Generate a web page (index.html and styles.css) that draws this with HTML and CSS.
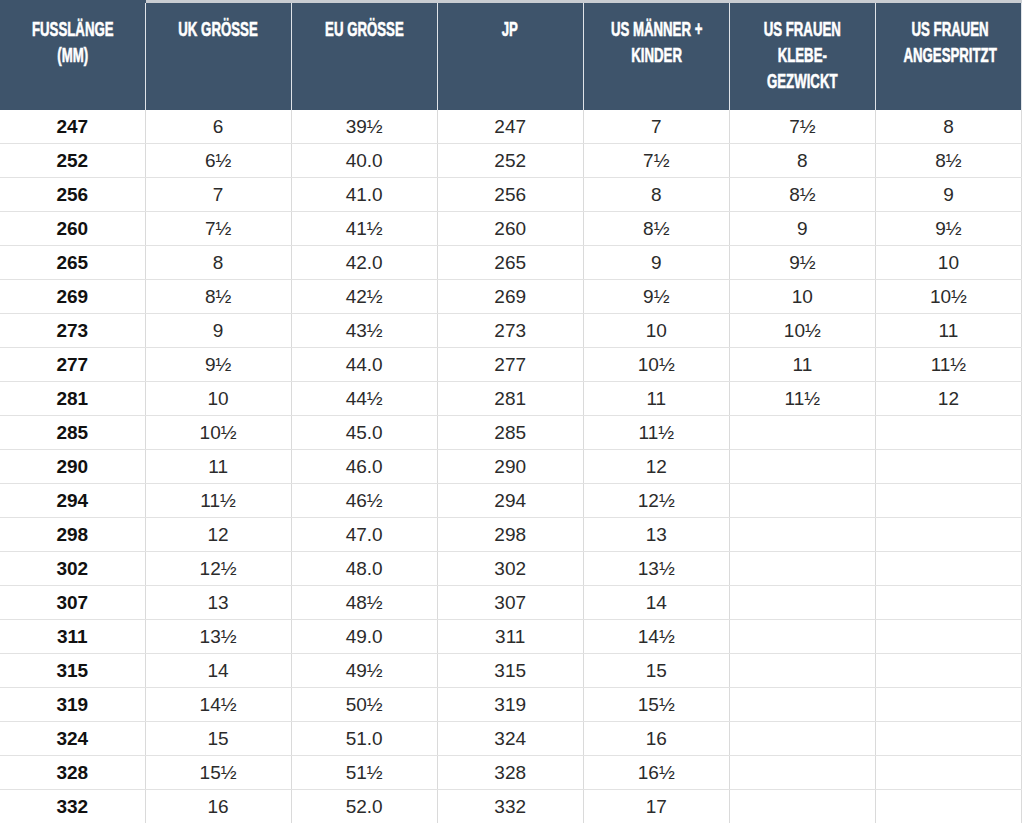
FILE: index.html
```html
<!DOCTYPE html>
<html lang="de">
<head>
<meta charset="utf-8">
<title>Größentabelle</title>
<link rel="stylesheet" href="styles.css">
</head>
<body>
<table class="sizes">
  <colgroup>
    <col class="c-first"><col class="c"><col class="c"><col class="c"><col class="c"><col class="c"><col class="c">
  </colgroup>
  <thead>
    <tr>
      <th class="first"><span class="hd">Fusslänge<br>(mm)</span></th>
      <th><span class="hd">UK Grösse</span></th>
      <th><span class="hd">EU Grösse</span></th>
      <th><span class="hd">JP</span></th>
      <th><span class="hd">US Männer +<br>Kinder</span></th>
      <th><span class="hd">US Frauen<br>Klebe-<br>gezwickt</span></th>
      <th><span class="hd">US Frauen<br>angespritzt</span></th>
    </tr>
  </thead>
  <tbody>
    <tr><td>247</td><td>6</td><td>39½</td><td>247</td><td>7</td><td>7½</td><td>8</td></tr>
    <tr><td>252</td><td>6½</td><td>40.0</td><td>252</td><td>7½</td><td>8</td><td>8½</td></tr>
    <tr><td>256</td><td>7</td><td>41.0</td><td>256</td><td>8</td><td>8½</td><td>9</td></tr>
    <tr><td>260</td><td>7½</td><td>41½</td><td>260</td><td>8½</td><td>9</td><td>9½</td></tr>
    <tr><td>265</td><td>8</td><td>42.0</td><td>265</td><td>9</td><td>9½</td><td>10</td></tr>
    <tr><td>269</td><td>8½</td><td>42½</td><td>269</td><td>9½</td><td>10</td><td>10½</td></tr>
    <tr><td>273</td><td>9</td><td>43½</td><td>273</td><td>10</td><td>10½</td><td>11</td></tr>
    <tr><td>277</td><td>9½</td><td>44.0</td><td>277</td><td>10½</td><td>11</td><td>11½</td></tr>
    <tr><td>281</td><td>10</td><td>44½</td><td>281</td><td>11</td><td>11½</td><td>12</td></tr>
    <tr><td>285</td><td>10½</td><td>45.0</td><td>285</td><td>11½</td><td></td><td></td></tr>
    <tr><td>290</td><td>11</td><td>46.0</td><td>290</td><td>12</td><td></td><td></td></tr>
    <tr><td>294</td><td>11½</td><td>46½</td><td>294</td><td>12½</td><td></td><td></td></tr>
    <tr><td>298</td><td>12</td><td>47.0</td><td>298</td><td>13</td><td></td><td></td></tr>
    <tr><td>302</td><td>12½</td><td>48.0</td><td>302</td><td>13½</td><td></td><td></td></tr>
    <tr><td>307</td><td>13</td><td>48½</td><td>307</td><td>14</td><td></td><td></td></tr>
    <tr><td>311</td><td>13½</td><td>49.0</td><td>311</td><td>14½</td><td></td><td></td></tr>
    <tr><td>315</td><td>14</td><td>49½</td><td>315</td><td>15</td><td></td><td></td></tr>
    <tr><td>319</td><td>14½</td><td>50½</td><td>319</td><td>15½</td><td></td><td></td></tr>
    <tr><td>324</td><td>15</td><td>51.0</td><td>324</td><td>16</td><td></td><td></td></tr>
    <tr><td>328</td><td>15½</td><td>51½</td><td>328</td><td>16½</td><td></td><td></td></tr>
    <tr><td>332</td><td>16</td><td>52.0</td><td>332</td><td>17</td><td></td><td></td></tr>
  </tbody>
</table>
</body>
</html>
```

FILE: styles.css
```css
html, body {
  margin: 0;
  padding: 0;
  background: #ffffff;
}

.sizes {
  border-collapse: collapse;
  table-layout: fixed;
  width: 1022px;
  font-family: "Liberation Sans", Arial, sans-serif;
}

.c-first { width: 145px; }
.c { width: 146px; }

.sizes th {
  background: #3e546b;
  color: #ffffff;
  height: 94px;
  padding: 13px 0 0;
  vertical-align: top;
  text-align: center;
  border-top: 3px solid #c9cdd2;
  border-left: 1px solid #dfe3e8;
  border-right: 1px solid #dfe3e8;
  border-bottom: 0;
}

.sizes th.first {
  border-top-color: #3e546b;
  border-left: 0;
}

.hd {
  display: inline-block;
  font-family: "Liberation Sans", Arial, sans-serif;
  font-weight: 700;
  font-size: 21px;
  line-height: 26px;
  text-transform: uppercase;
  white-space: nowrap;
  transform: scaleX(0.63);
  transform-origin: 50% 0;
  -webkit-text-stroke: 0.6px #ffffff;
}

.sizes td {
  height: 33px;
  padding: 0;
  text-align: center;
  vertical-align: middle;
  font-size: 19px;
  color: #2b2b2b;
  border-bottom: 1px solid #e2e2e2;
  border-left: 1px solid #dadada;
  border-right: 1px solid #dadada;
}

.sizes td:first-child {
  font-weight: 700;
  color: #111111;
  border-left: 0;
}

.sizes tbody tr:last-child td {
  border-bottom: 0;
}
```
